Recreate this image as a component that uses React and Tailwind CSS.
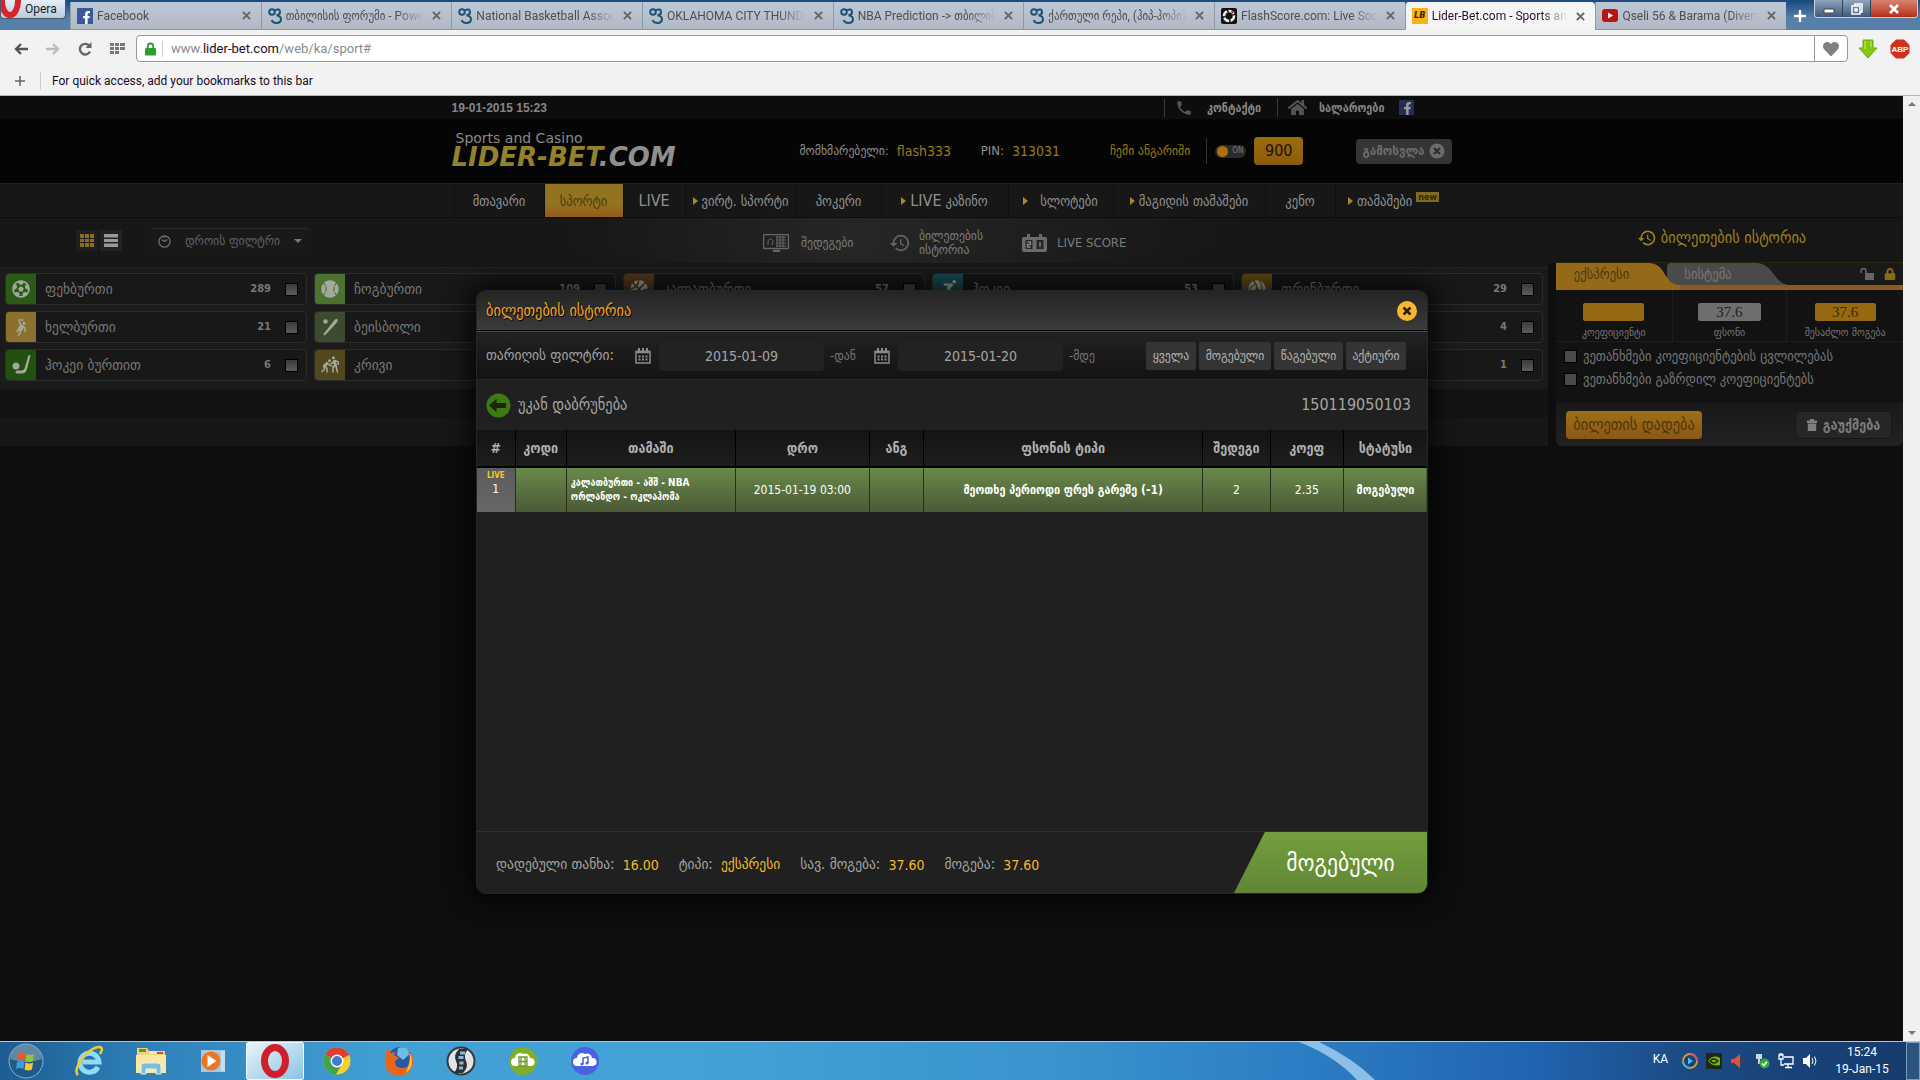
import { FaFutbol, FaBaseballBall, FaBasketballBall, FaVolleyballBall, FaHockeyPuck, FaHeart, FaHome, FaLock, FaFacebookF, FaSkating } from "react-icons/fa";
import { MdPhone, MdHistory, MdSportsHandball, MdSportsHockey, MdSportsKabaddi } from "react-icons/md";

const caps = "font-['DejaVu_Sans_Condensed','DejaVu_Sans',sans-serif]";
const system = "font-['Roboto','DejaVu_Sans_Condensed',sans-serif]";

const tabs = [
    { title: "Facebook", icon: "facebook" },
    { title: "თბილისის ფორუმი - Powered", icon: "forum" },
    { title: "National Basketball Association", icon: "forum" },
    { title: "OKLAHOMA CITY THUNDER", icon: "forum" },
    { title: "NBA Prediction -> თბილისის", icon: "forum" },
    { title: "ქართული რეპი, (ჰიპ-ჰოპი)", icon: "forum" },
    { title: "FlashScore.com: Live Soccer", icon: "flash" },
    { title: "Lider-Bet.com - Sports and", icon: "lider", active: true },
    { title: "Qseli 56 & Barama (Diversia)", icon: "youtube" },
];

const navItems = [
    { label: "მთავარი", width: "w-[90px]" },
    { label: "სპორტი", width: "w-[79px]", active: true },
    { label: "LIVE", width: "w-[62px]", big: true },
    { label: "ვირტ. სპორტი", width: "w-[111px]", arrow: true },
    { label: "პოკერი", width: "w-[85px]" },
    { prefix: "LIVE", label: "კაზინო", width: "w-[127px]", arrow: true },
    { label: "სლოტები", width: "w-[105px]", arrow: true, wide: true },
    { label: "მაგიდის თამაშები", width: "w-[152px]", arrow: true },
    { label: "კენო", width: "w-[70px]" },
    { label: "თამაშები", width: "w-[117px]", arrow: true, isNew: true },
];

const sports = [
    { name: "ფეხბურთი", count: "289", color: "bg-[#2a5a16]", Icon: FaFutbol },
    { name: "ჩოგბურთი", count: "109", color: "bg-[#4c7232]", Icon: FaBaseballBall },
    { name: "კალათბურთი", count: "57", color: "bg-[#543a1f]", Icon: FaBasketballBall },
    { name: "ჰოკეი", count: "53", color: "bg-[#1a4d57]", Icon: FaSkating },
    { name: "ფრენბურთი", count: "29", color: "bg-[#5f4b14]", Icon: FaVolleyballBall },
    { name: "ხელბურთი", count: "21", color: "bg-[#8c7030]", Icon: MdSportsHandball },
    { name: "ბეისბოლი", count: "8", color: "bg-[#3c4a30]", Icon: BatIcon },
    { name: "რაგბი", count: "7", color: "bg-[#3c4a30]", Icon: FaFutbol },
    { name: "ფუტსალი", count: "6", color: "bg-[#2a5a16]", Icon: FaFutbol },
    { name: "სნუკერი", count: "4", color: "bg-[#2a5a16]", Icon: FaHockeyPuck },
    { name: "ჰოკეი ბურთით", count: "6", color: "bg-[#22500f]", Icon: StickIcon },
    { name: "კრივი", count: "3", color: "bg-[#51481f]", Icon: MdSportsKabaddi },
    { name: "დარტსი", count: "2", color: "bg-[#3c4a30]", Icon: FaFutbol },
    { name: "ბენდი", count: "2", color: "bg-[#2a5a16]", Icon: MdSportsHockey },
    { name: "ფორმულა 1", count: "1", color: "bg-[#2a5a16]", Icon: FaHockeyPuck },
];

const columns = [
    { title: "#", width: "w-[4%]" },
    { title: "კოდი", width: "w-[5.4%]" },
    { title: "თამაში", width: "w-[17.8%]" },
    { title: "დრო", width: "w-[14.1%]" },
    { title: "ანგ", width: "w-[5.7%]" },
    { title: "ფსონის ტიპი", width: "w-[29.4%]" },
    { title: "შედეგი", width: "w-[7.1%]" },
    { title: "კოეფ", width: "w-[7.7%]" },
    { title: "სტატუსი", width: "w-[8.8%]" },
];

const totals = [
    { label: "დადებული თანხა:", value: "16.00" },
    { label: "ტიპი:", value: "ექსპრესი", word: true },
    { label: "სავ. მოგება:", value: "37.60" },
    { label: "მოგება:", value: "37.60" },
];

function BatIcon(props) {
    return (
        <svg viewBox="0 0 20 20" fill="currentColor" width="18" height="18" {...props}>
            <path d="M18 1.5c1 1 .6 2.2-.4 3.4L9 14.5 4 19.5 2.5 18 7 12.5 15 2.2c1-1.2 2-1.5 3-.7z" />
            <circle cx="5" cy="4" r="2.5" />
        </svg>
    );
}

function StickIcon(props) {
    return (
        <svg viewBox="0 0 20 20" fill="currentColor" width="20" height="20" {...props}>
            <path d="M17.5 0l2 .6L16 14c-.8 3-2.600 4.600-5.5 4.600H7c-1.5 0-2.4-.6-2.4-1.6S5.5 15.5 7 15.5h3.5c1.6 0 2.7-.8 3.2-2.5z" />
            <circle cx="5" cy="11" r="3.5" />
        </svg>
    );
}

function CalendarIcon() {
    return (
        <svg viewBox="0 0 16 16" width="16" height="16" className="shrink-0 text-[#8b8b8b]" fill="none" stroke="currentColor">
            <path d="M1 3.5h14V15H1z" strokeWidth="1.5" />
            <path d="M1.500 4h13" strokeWidth="2.5" />
            <path d="M4 0v3M8 0v3M12 0v3" strokeWidth="2" />
            <path d="M3.5 8.500h9M3.5 11.500h9" strokeWidth="1.800" strokeDasharray="2 1.5" />
        </svg>
    );
}

function TabIcon({ type }) {
    if (type === "facebook") {
        return (
            <span className="flex size-4 shrink-0 items-end justify-end bg-[#3b5998] text-white">
                <FaFacebookF size={13} />
            </span>
        );
    }
    if (type === "forum") {
        return (
            <svg viewBox="0 0 14 16" className="h-4 w-[14px] shrink-0" fill="none" stroke="#1d5273" strokeWidth="2">
                <circle cx="4" cy="4" r="2.8" />
                <path d="M7 2.200Q12 0 12 4 12 7 8.500 7.300 13 8 13 11.500 12.500 15 8.500 15 4.500 15 3.800 12" />
            </svg>
        );
    }
    if (type === "flash") {
        return (
            <svg viewBox="0 0 16 16" className="size-4 shrink-0">
                <rect width="16" height="16" rx="2" fill="#111" />
                <circle cx="8" cy="8" r="5" fill="none" stroke="#eee" strokeWidth="2.5" strokeDasharray="6 1.5" />
                <path d="M10 3h4l-3 3z" fill="#d22" />
            </svg>
        );
    }
    if (type === "lider") {
        return <span className={`${caps} flex size-4 shrink-0 items-center justify-center bg-[#fbb117] text-[9px] font-bold text-[#3a2200] italic`}>LB</span>;
    }
    return (
        <svg viewBox="0 0 16 16" className="size-4 shrink-0">
            <rect y="1" width="16" height="13" rx="3" fill="#b81414" />
            <path d="M6 4.5l5 3-5 3z" fill="#fff" />
        </svg>
    );
}

function BrowserTabs() {
    return (
        <div className="flex h-[30px] items-end bg-linear-to-b from-[#1d4d80] from-5% to-[#5680a8] to-60% pr-0.5">
            <button className={`${system} flex h-[19px] w-[66px] shrink-0 items-center gap-1 self-start overflow-hidden rounded-b border border-t-0 border-[#4a5b70] bg-linear-to-b from-[#e6edf6] to-[#b9cbe0] text-xs text-[#222]`}>
                <svg viewBox="0 0 20 18" className="h-[18px] w-5 shrink-0">
                    <ellipse cx="9" cy="1" rx="8" ry="14" fill="none" stroke="#d8232c" strokeWidth="6" />
                </svg>
                Opera
            </button>
            <div className="ml-1 flex h-7 min-w-0 flex-1">
                {tabs.map((tab) => (
                    <div
                        key={tab.title}
                        className={`flex min-w-0 max-w-[191px] flex-1 items-center gap-1 border-l border-[#8e9aa8] pl-1.5 pr-2.5 ${tab.active ? "rounded-t bg-[#f5f5f5]" : "border-b border-b-[#8996a5] bg-linear-to-b from-[#bdc9d7] to-[#b0bac5]"}`}
                    >
                        <TabIcon type={tab.icon} />
                        <span className={`${system} min-w-0 flex-1 overflow-hidden text-xs whitespace-nowrap [mask-image:linear-gradient(to_right,black_80%,transparent)] ${tab.active ? "text-[#2a1030]" : "text-[#4c4f55]"}`}>
                            {tab.title}
                        </span>
                        <button aria-label="Close tab" className="ml-1">
                            <svg viewBox="0 0 10 10" className="size-[9px]" stroke="#666" strokeWidth="2.2">
                                <path d="M1 1l8 8M9 1l-8 8" />
                            </svg>
                        </button>
                    </div>
                ))}
                <button aria-label="New tab" className="mx-2 self-center">
                    <svg viewBox="0 0 12 12" className="size-3" stroke="#fff" strokeWidth="2.5">
                        <path d="M6 0v12M0 6h12" />
                    </svg>
                </button>
            </div>
            <div className="flex h-[18px] w-[104px] shrink-0 self-start overflow-hidden rounded-b border border-t-0 border-[#c3d2e2] text-white">
                <button aria-label="Minimize" className="flex w-7 items-center justify-center border-r border-[#32455c] bg-linear-to-b from-[#8fa5be] to-[#41597a]">
                    <svg viewBox="0 0 12 10" className="h-2.5 w-3"><path d="M1 5h10v4H1z" fill="#fff" stroke="#444" /></svg>
                </button>
                <button aria-label="Restore" className="flex w-7 items-center justify-center border-r border-[#32455c] bg-linear-to-b from-[#8fa5be] to-[#41597a]">
                    <svg viewBox="0 0 12 12" className="size-3" fill="none" stroke="#fff" strokeWidth="1.5">
                        <path d="M4 3V1h7v8H9M1 3h8v8H1zM4 6h2v2H4z" />
                    </svg>
                </button>
                <button aria-label="Close" className="flex flex-1 items-center justify-center bg-linear-to-b from-[#d6836f] to-[#b52b15]">
                    <svg viewBox="0 0 12 10" className="h-2.5 w-3" stroke="#fff" strokeWidth="2.5"><path d="M2 1l8 8M10 1L2 9" /></svg>
                </button>
            </div>
        </div>
    );
}

function AddressBar() {
    return (
        <div className={`${system} h-[66px] border-b border-[#b5b5b5] bg-[#f2f2f2] pt-[5px]`}>
            <div className="flex h-[27px] items-center">
                <div className="flex w-[136px] shrink-0 items-center gap-[18px] pl-3.5">
                    <button aria-label="Back">
                        <svg viewBox="0 0 14 12" className="h-3 w-3.5" fill="none" stroke="#555" strokeWidth="2.4"><path d="M7 1L2 6l5 5M2 6h12" /></svg>
                    </button>
                    <button aria-label="Forward">
                        <svg viewBox="0 0 14 12" className="h-3 w-3.5" fill="none" stroke="#bbb" strokeWidth="2.4"><path d="M7 1l5 5-5 5M12 6H0" /></svg>
                    </button>
                    <button aria-label="Reload">
                        <svg viewBox="0 0 14 14" className="size-3.5" fill="none" stroke="#666" strokeWidth="2.4">
                            <path d="M12 9.5A5.3 5.3 0 1 1 11.5 4" />
                            <path d="M13.5 0v6h-6z" fill="#666" stroke="none" />
                        </svg>
                    </button>
                    <button aria-label="Speed dial">
                        <svg viewBox="0 0 16 12" className="h-3 w-4" fill="#777">
                            <path d="M0 0h4v3H0zM5 0h4v3H5zM10 0h5v3h-5zM0 4h4v3H0zM5 4h4v3H5zM10 4h5v3h-5zM0 8h4v3H0zM5 8h4v3H5z" />
                        </svg>
                    </button>
                </div>
                <div className="flex h-[27px] flex-1 items-center rounded border border-[#999] bg-white">
                    <svg viewBox="0 0 12 14" className="ml-2 h-3.5 w-[11px] shrink-0">
                        <path d="M3 7V4a3 3 0 0 1 6 0v3" fill="none" stroke="#2f9e31" strokeWidth="2" />
                        <rect y="6" width="12" height="8" rx="1" fill="#2f9e31" />
                    </svg>
                    <span className="ml-1.5 h-4 w-px bg-[#ccc]" />
                    <a href="#" className="ml-2 flex-1 text-[13px] text-[#8a8a8a]">
                        www.<span className="text-[#1c0a1e]">lider-bet.com</span>/web/ka/sport#
                    </a>
                    <button aria-label="Bookmark" className="flex h-full w-[33px] items-center justify-center border-l border-[#999]">
                        <FaHeart size={16} color="#808080" />
                    </button>
                </div>
                <div className="flex w-[72px] shrink-0 items-center justify-between pr-2.5 pl-2.5">
                    <button aria-label="Download">
                        <svg viewBox="0 0 20 20" className="size-5"><path d="M5 1h10v8h4l-9 10L1 9h4z" fill="#86c914" stroke="#6aa80f" /><path d="M7 2v8M13 2v6" stroke="#c8ee6c" /></svg>
                    </button>
                    <button aria-label="Adblock">
                        <svg viewBox="0 0 20 20" className="size-5">
                            <path d="M6 .5h8L19.5 6v8L14 19.5H6L.5 14V6z" fill="#d1301c" />
                            <text x="10" y="13" textAnchor="middle" fontSize="8" fontWeight="bold" fill="#fff" fontFamily="Liberation Sans, sans-serif">ABP</text>
                        </svg>
                    </button>
                </div>
            </div>
            <div className="flex h-[38px] items-center">
                <button aria-label="Add bookmark" className="ml-[15px]">
                    <svg viewBox="0 0 10 10" className="size-2.5" stroke="#666" strokeWidth="1.6"><path d="M5 0v10M0 5h10" /></svg>
                </button>
                <span className="ml-[15px] h-[18px] w-px bg-[#ccc]" />
                <span className="ml-[11px] text-xs text-[#1c0a1e]">For quick access, add your bookmarks to this bar</span>
            </div>
        </div>
    );
}

function SiteHeader() {
    return (
        <header>
            <div className="h-[23px] bg-[#0d0d0d]">
                <div className="mx-auto flex h-full max-w-[1000px] items-center text-xs font-bold text-[#868686]">
                    <span className="flex-1 font-['Liberation_Sans',sans-serif]">19-01-2015 15:23</span>
                    <a href="#" className="flex w-[113px] items-center border-l border-[#3a3a3a] pl-2.5">
                        <MdPhone size={18} color="#555" className="mr-3.5" />
                        კონტაქტი
                    </a>
                    <a href="#" className="flex items-center border-l border-[#3a3a3a] pl-2.5">
                        <FaHome size={19} color="#555" className="mr-3" />
                        სალაროები
                    </a>
                    <a href="#" aria-label="Facebook" className="mr-[38px] ml-3.5 flex size-[15px] items-end justify-end bg-[#232f57] text-[#9a9a9a]">
                        <FaFacebookF size={13} />
                    </a>
                </div>
            </div>
            <div className="h-16 bg-[#050505]">
                <div className="mx-auto flex h-full max-w-[1000px] items-center text-[#909090]">
                    <a href="#" className="w-[348px] pb-0.5">
                        <span className="block pl-1 font-['DejaVu_Sans',sans-serif] text-sm leading-[14px] text-[#8a8a8a]">Sports and Casino</span>
                        <span className="block font-['DejaVu_Sans',sans-serif] text-[26px] leading-6 font-bold whitespace-nowrap text-[#8f8f8f] italic">
                            <span className="text-[#94812b]">LIDER-BET</span>.COM
                        </span>
                    </a>
                    <span className="text-[13px]">მომხმარებელი:</span>
                    <span className="ml-2 w-[84px] text-sm text-[#9b7a1d]">flash333</span>
                    <span className="text-[13px]">PIN:</span>
                    <span className="ml-2 w-[98px] text-sm text-[#9b7a1d]">313031</span>
                    <a href="#" className="text-[13px] text-[#a07a14]">ჩემი ანგარიში</a>
                    <span className="ml-4 h-[26px] w-px bg-[#333]" />
                    <button role="switch" aria-checked="true" aria-label="ON" className="ml-2 flex h-[13px] w-[31px] items-center gap-1 rounded-full bg-[#2b2b2b] pl-0.5 text-[8px] text-[#777]">
                        <span className="size-[11px] rounded-full bg-[#b06f0a]" />
                        ON
                    </button>
                    <button className="ml-2 h-7 w-[49px] rounded bg-linear-to-b from-[#9a6d0c] to-[#8c5a0e] text-base text-[#1c1200]">900</button>
                    <button className="ml-auto flex h-[25px] w-24 items-center justify-center gap-1 rounded bg-[#353535] text-[13px] font-bold text-[#6c6c6c]">
                        გამოსვლა
                        <svg viewBox="0 0 16 16" className="size-4">
                            <circle cx="8" cy="8" r="7.5" fill="#6c6c6c" />
                            <path d="M5 5l6 6M11 5l-6 6" stroke="#2a2a2a" strokeWidth="2" />
                        </svg>
                    </button>
                </div>
            </div>
            <nav className="h-[35px] border-y border-[#202020] border-b-[#0d0d0d] bg-[#171717]">
                <div className="mx-auto flex h-full max-w-[1000px] pl-0.5">
                    {navItems.map((item) => (
                        <a
                            key={item.label}
                            href="#"
                            className={`${item.width} flex items-center justify-center border-l border-[#0e0e0e] text-sm whitespace-nowrap ${item.active ? "bg-linear-to-b from-[#927320] from-60% to-[#96591a] text-[#4f3a0c]" : "text-[#919191]"}`}
                        >
                            {item.arrow && <span className={`${item.wide ? "mr-3" : "mr-1"} border-y-4 border-l-[5px] border-y-transparent border-l-[#a78a2a]`} />}
                            {item.prefix && <span className="mr-1 text-base">{item.prefix}</span>}
                            <span className={item.big ? "text-base" : ""}>{item.label}</span>
                            {item.isNew && <span className="mb-2 ml-1 bg-[#806a20] px-0.5 text-[9px] leading-[10px] font-bold text-[#332a08]">new</span>}
                        </a>
                    ))}
                </div>
            </nav>
        </header>
    );
}

function SubNav() {
    return (
        <div className="grid h-[45px] grid-cols-[1fr_auto_1fr] items-center bg-linear-to-r from-[#171717] from-30% via-[#262626] via-45% to-[#161616] to-65% text-[#7c7c7c]">
            <div className="flex items-center pl-[76px]">
                <button aria-label="Grid view" className="flex h-[21px] w-[22px] items-center justify-center bg-[#1f1f1f]">
                    <svg viewBox="0 0 14 13" className="h-[13px] w-3.5" fill="#8f6b1b"><path d="M0 0h4v4H0zM5 0h4v4H5zM10 0h4v4h-4zM0 5h4v3H0zM5 5h4v3H5zM10 5h4v3h-4zM0 9h4v4H0zM5 9h4v4H5zM10 9h4v4h-4z" /></svg>
                </button>
                <button aria-label="List view" className="ml-0.5 flex h-[21px] w-[22px] items-center justify-center bg-[#222]">
                    <svg viewBox="0 0 14 13" className="h-[13px] w-3.5" fill="#999"><path d="M0 0h14v3.5H0zM0 5h14v3H0zM0 9.5h14V13H0z" /></svg>
                </button>
                <div className="relative ml-[28px] flex h-[26px] w-40 items-center rounded border-t border-[#2c2c2c] bg-[#191919]">
                    <svg viewBox="0 0 14 14" className="absolute left-2 size-[13px]" fill="none" stroke="#6b6b6b" strokeWidth="1.5"><circle cx="7" cy="7" r="6" /><path d="M4 5l3 2 3-2M5 2h4" /></svg>
                    <select aria-label="დროის ფილტრი" className="h-full w-full appearance-none bg-transparent pl-[35px] text-[13px] text-[#616161]">
                        <option>დროის ფილტრი</option>
                    </select>
                    <span className="pointer-events-none absolute right-2 border-x-4 border-t-4 border-x-transparent border-t-[#777]" />
                </div>
            </div>
            <div className="flex items-center pt-1 text-[13px]">
                <a href="#" className="flex w-[126px] items-center gap-3">
                    <svg viewBox="0 0 26 18" className="h-[18px] w-[26px]" fill="none" stroke="#666">
                        <rect x=".5" y=".5" width="25" height="14" rx="1" strokeWidth="1.5" />
                        <path d="M5 11V8c0-4 5-4 5 0l-1 3M13 3h10M13 6h10M13 9h10M13 12h10M14 2v11M17 2v11M20 2v11" />
                        <path d="M10 17h7" strokeWidth="2.5" />
                    </svg>
                    შედეგები
                </a>
                <a href="#" className="flex w-[133px] items-center gap-2 leading-[14px]">
                    <MdHistory size={22} color="#666" />
                    <span className="w-20">ბილეთების ისტორია</span>
                </a>
                <a href="#" className="flex w-[118px] items-center gap-2.5 whitespace-nowrap">
                    <svg viewBox="0 0 25 18" className="h-[18px] w-[25px]">
                        <path d="M2 3h3V0h3v3h9V0h3v3h3a2 2 0 0 1 2 2v11a2 2 0 0 1-2 2H2a2 2 0 0 1-2-2V5a2 2 0 0 1 2-2z" fill="#6b6b6b" />
                        <rect x="3.5" y="6" width="7" height="9" fill="#262626" />
                        <rect x="14.5" y="6" width="7" height="9" fill="#262626" />
                        <path d="M5.500 8h3v2.500h-3V13h3M18 8v5" fill="none" stroke="#888" strokeWidth="1.3" />
                    </svg>
                    LIVE SCORE
                </a>
            </div>
            <a href="#" className="ml-auto flex h-full w-[347px] items-center justify-center gap-1 border-b border-[#2a2310] pr-4 pb-1 text-base text-[#9d8121]">
                <MdHistory size={20} />
                ბილეთების ისტორია
            </a>
        </div>
    );
}

function SportRow({ sport, index }) {
    const { Icon } = sport;
    return (
        <label htmlFor={`sport-${index}`} className="flex h-8 items-center overflow-hidden rounded border border-[#2c2c2c] bg-[#181818] text-[#777]">
            <span className={`${sport.color} flex h-full w-[30px] items-center justify-center text-[#a3aa9b]`}>
                <Icon size={18} />
            </span>
            <span className="ml-[9px] flex-1 text-[15px]">{sport.name}</span>
            <span className="text-[11px] font-bold">{sport.count}</span>
            <input id={`sport-${index}`} type="checkbox" className="mr-2 ml-3.5 size-[13px] appearance-none border border-black bg-linear-to-b from-[#3b3b3b] to-[#5c5c5c]" />
        </label>
    );
}

function BetSlip() {
    return (
        <aside className="w-[347px] shrink-0 overflow-hidden rounded-b-md bg-[#121212] text-[#777]">
            <div className="relative flex h-[27px] border-b-[5px] border-[#8a5b1b] bg-[#1a1a1a]">
                <svg viewBox="0 0 240 27" className="absolute top-0 left-0 h-[27px] w-60">
                    <path d="M111 22V4q0-4 4-4h85c18 0 18 22 34 22z" fill="#4a4a4a" />
                    <path d="M0 0h92c20 0 14 22 32 22v5H0z" fill="#94691a" />
                </svg>
                <button className="relative h-[22px] w-[111px] pr-5 text-sm text-[#4d370c]">ექსპრესი</button>
                <button className="relative h-[22px] w-[82px] text-sm text-[#787878]">სისტემა</button>
                <div className="ml-auto flex items-center gap-2.5 pr-[7px]">
                    <svg viewBox="0 0 14 12" className="h-3 w-3.5"><path d="M1 5V3a2 2 0 0 1 5 0v3" fill="none" stroke="#666" strokeWidth="1.5" /><rect x="5" y="5" width="9" height="7" fill="#666" /></svg>
                    <FaLock size={12} color="#8a6a16" />
                </div>
            </div>
            <div className="grid h-[52px] grid-cols-3 border-b border-[#1d1d1d] text-[11px] leading-[15px]">
                <div className="flex flex-col items-center gap-1 pt-[13px]">
                    <input id="coef" className="h-[18px] w-[61px] rounded-xs bg-[#94690f]" />
                    <label htmlFor="coef">კოეფიციენტი</label>
                </div>
                <div className="flex flex-col items-center gap-1 border-x border-[#1d1d1d] pt-[13px]">
                    <input id="stake" defaultValue="37.6" className="h-[18px] w-[63px] rounded-xs bg-[#6e6e6e] text-center font-['Liberation_Serif',serif] text-[15px] text-[#222]" />
                    <label htmlFor="stake">ფსონი</label>
                </div>
                <div className="flex flex-col items-center gap-1 pt-[13px]">
                    <input id="win" defaultValue="37.6" className="h-[18px] w-[61px] rounded-xs bg-[#94690f] text-center font-['Liberation_Serif',serif] text-[15px] text-[#3d2a05]" />
                    <label htmlFor="win">შესაძლო მოგება</label>
                </div>
            </div>
            <div className="flex h-[61px] flex-col gap-[3px] pt-1 pl-2 text-sm whitespace-nowrap">
                <label className="flex items-center gap-1.5">
                    <input type="checkbox" className="size-[13px] appearance-none border border-black bg-[#4a4a4a]" />
                    ვეთანხმები კოეფიციენტების ცვლილებას
                </label>
                <label className="flex items-center gap-1.5">
                    <input type="checkbox" className="size-[13px] appearance-none border border-black bg-[#4a4a4a]" />
                    ვეთანხმები გაზრდილ კოეფიციენტებს
                </label>
            </div>
            <div className="flex h-[43px] items-center justify-between bg-linear-to-b from-[#191919] to-[#222] pr-[11px] pl-2.5">
                <button className="h-7 w-[136px] rounded bg-linear-to-b from-[#9d7017] to-[#8a5718] text-base text-[#4e3709]">ბილეთის დადება</button>
                <button className="flex h-7 w-[97px] items-center justify-center gap-1.5 rounded border border-[#161616] bg-[#262626] text-sm font-bold text-[#7d7d7d]">
                    <svg viewBox="0 0 10 12" className="h-3 w-2.5" fill="#808080"><path d="M3 0h4v1.5h3V4H0V1.5h3zM.8 4.5h8.4V12H.8z" /></svg>
                    გაუქმება
                </button>
            </div>
        </aside>
    );
}

function HistoryModal() {
    return (
        <div role="dialog" aria-label="ბილეთების ისტორია" className="mt-[194px] ml-px flex h-fit w-[952px] max-w-full flex-col overflow-hidden rounded-[10px] border border-[#262626] bg-[#202020] text-[#a5a5a5] shadow-[0_0_24px_8px_rgba(0,0,0,0.7)]">
            <div className="flex h-10 items-center justify-between border-b border-black bg-linear-to-b from-[#242424] to-[#3b3b3b] pr-2.5 pl-[9px]">
                <h2 className="text-base text-[#f5a31d] [text-shadow:1px_1px_1px_#000]">ბილეთების ისტორია</h2>
                <button aria-label="Close">
                    <svg viewBox="0 0 20 20" className="size-5">
                        <circle cx="10" cy="10" r="10" fill="#f7b733" />
                        <path d="M6.5 6.5l7 7M13.5 6.5l-7 7" stroke="#2b2108" strokeWidth="2.5" />
                    </svg>
                </button>
            </div>
            <div className="flex h-12 items-center border-t border-[#4a4a4a] bg-linear-to-b from-[#222] to-[#131313] pl-[9px] pr-[21px]">
                <span className="w-[149px] text-[15px] whitespace-nowrap">თარიღის ფილტრი:</span>
                <CalendarIcon />
                <input id="from" defaultValue="2015-01-09" className="ml-2 h-[30px] w-[165px] rounded bg-[#222] text-center text-sm" />
                <label htmlFor="from" className="ml-1.5 w-11 text-[13px] text-[#777]">-დან</label>
                <CalendarIcon />
                <input id="to" defaultValue="2015-01-20" className="ml-2 h-[30px] w-[165px] rounded bg-[#222] text-center text-sm" />
                <label htmlFor="to" className="ml-1.5 text-[13px] text-[#777]">-მდე</label>
                <div className="ml-auto flex gap-[3px] text-[13px] whitespace-nowrap text-[#b5b5b5]">
                    <button className="h-7 w-[50px] rounded-xs bg-[#343434]">ყველა</button>
                    <button className="h-7 w-[72px] rounded-xs bg-[#343434]">მოგებული</button>
                    <button className="h-7 w-[69px] rounded-xs bg-[#343434]">წაგებული</button>
                    <button className="h-7 w-[60px] rounded-xs bg-[#343434]">აქტიური</button>
                </div>
            </div>
            <div className="flex h-[51px] items-center justify-between border-t border-[#282828] pr-4 pl-[9px]">
                <button className="flex items-center gap-[7px] text-base">
                    <svg viewBox="0 0 26 26" className="size-[25px]">
                        <circle cx="13" cy="13" r="12.5" fill="#3d7a0f" />
                        <path d="M3 13l8-7v4.5h10v5H11V20z" fill="#1c260f" />
                    </svg>
                    უკან დაბრუნება
                </button>
                <span className="text-base">150119050103</span>
            </div>
            <table className="w-full table-fixed border-collapse text-center">
                <thead>
                    <tr className="h-[37px] bg-linear-to-b from-[#141414] to-[#1e1e1e] text-sm text-[#b0b0b0]">
                        {columns.map((col) => (
                            <th key={col.title} className={`${col.width} border-r border-b-2 border-black whitespace-nowrap last:border-r-0`}>{col.title}</th>
                        ))}
                    </tr>
                </thead>
                <tbody>
                    <tr className="h-[45px] bg-linear-to-b from-[#6a8b4a] to-[#4a5a37] text-xs text-white [&>td]:border-r [&>td]:border-[#263019] [&>td]:p-0 [&>td:last-child]:border-r-0">
                        <td className="bg-linear-to-b from-[#5c5c5c] to-[#676767] align-top">
                            <span className="block pt-0.5 text-[8px] leading-[11px] font-bold text-[#f2c82c]">LIVE</span>
                            1
                        </td>
                        <td></td>
                        <td className="text-left text-[10px] leading-[14px] font-bold whitespace-nowrap">
                            <div className="pl-1">
                                კალათბურთი - აშშ - NBA
                                <br />
                                ორლანდო - ოკლაჰომა
                            </div>
                        </td>
                        <td>2015-01-19 03:00</td>
                        <td></td>
                        <td className="font-bold">მეოთხე პერიოდი ფრეს გარეშე (-1)</td>
                        <td>2</td>
                        <td>2.35</td>
                        <td className="font-bold">მოგებული</td>
                    </tr>
                </tbody>
            </table>
            <div className="min-h-[319px]" />
            <div className="flex h-[62px] items-center border-t border-[#303030] pl-[19px]">
                <div className="flex flex-1 gap-5 pt-1 text-[15px] whitespace-nowrap">
                    {totals.map((item) => (
                        <span key={item.label} className="flex items-center gap-2">
                            {item.label}
                            <span className={`text-[#f4b928] ${item.word ? "text-[15px]" : "text-sm"}`}>{item.value}</span>
                        </span>
                    ))}
                </div>
                <div className="flex h-full w-[193px] items-center justify-center bg-linear-to-b from-[#739f3b] to-[#618636] pl-5 text-2xl text-white [clip-path:polygon(16%_0,100%_0,100%_100%,0_100%)]">მოგებული</div>
            </div>
        </div>
    );
}

function ScrollBar() {
    return (
        <div className="flex w-[17px] shrink-0 flex-col items-center justify-between bg-[#f0f0f0] py-1.5">
            <span className="border-x-4 border-b-4 border-x-transparent border-b-[#777]" />
            <span className="border-x-4 border-t-4 border-x-transparent border-t-[#777]" />
        </div>
    );
}

function Taskbar() {
    return (
        <footer className={`${system} flex h-[39px] shrink-0 items-center border-t border-[#a9c9e2] bg-[linear-gradient(to_right,#1c5c92,#2f82ba_8%,#419fd3_20%,#45a2d6_35%,#3a93cd_55%,#2d7fc3_67%,#2064ae_80%,#1b4a83_88%,#163a6c)] text-xs text-white`}>
            <button aria-label="Start" className="ml-2 shrink-0">
                <svg viewBox="0 0 36 36" className="size-9">
                    <circle cx="18" cy="18" r="17" fill="#215a86" stroke="#7fb6da" />
                    <path d="M2 16a16 15 0 0 1 32 0q-16 6-32 0z" fill="#8ba9bc" opacity=".6" />
                    <path d="M10 11q4-2.5 7.5-.5l-1 7q-4-2-7.5 0z" fill="#e8592a" />
                    <path d="M18.5 11q4 2 7.5 0l-1 7q-4 2-7.5 0z" fill="#8cc63e" />
                    <path d="M9 19q4-2 7.5 0l-1 7q-4-2-7.5 0z" fill="#3d9be0" />
                    <path d="M17.5 19.5q4 2 7.5 0l-1 7q-4 2-7.5 0z" fill="#fbc52d" />
                </svg>
            </button>
            <div className="ml-3.5 flex h-full items-center">
                <button aria-label="Internet Explorer" className="flex w-[62px] justify-center">
                    <svg viewBox="0 0 32 32" className="size-8" fill="none">
                        <path d="M25 22a9.5 9.5 0 1 1 1-5H10" stroke="#8fdcfa" strokeWidth="5" />
                        <path d="M5 30C-2 24 17 0 27 2c3 1 2 4 0 7" stroke="#f6ca2e" strokeWidth="2.5" />
                    </svg>
                </button>
                <button aria-label="Explorer" className="flex w-[62px] justify-center">
                    <svg viewBox="0 0 32 30" className="h-[30px] w-8">
                        <path d="M2 2h10l2 3h16v20H2z" fill="#f0d37a" />
                        <path d="M4 3h7v3H4z" fill="#4c9c4a" /><path d="M14 5h7v3h-7z" fill="#e9e5d0" /><path d="M22 6h6v2h-6z" fill="#d04b3a" />
                        <path d="M1 9h30v18H1z" fill="#f9e7a4" />
                        <path d="M6 28V20q0-3 3-3h14q3 0 3 3v8h-5v-5H11v5z" fill="#7cbcdf" stroke="#dff1fa" />
                    </svg>
                </button>
                <button aria-label="Media Player" className="flex w-[62px] justify-center">
                    <svg viewBox="0 0 26 26" className="size-[26px]">
                        <path d="M1 2h24v22H1z" fill="#a5cbe4" /><path d="M22 3v20M24 3v20" stroke="#e7f2fa" />
                        <circle cx="11" cy="13" r="9.5" fill="#ee7420" /><path d="M7.5 7l9 6-9 6z" fill="#fff" />
                    </svg>
                </button>
                <button aria-label="Opera" className="mx-0.5 flex h-[38px] w-[58px] items-center justify-center rounded-xs border border-[#eef7fc] bg-linear-to-br from-[#e8f4fa] to-[#8dc3e4]">
                    <svg viewBox="0 0 30 34" className="h-[34px] w-[30px]">
                        <ellipse cx="15" cy="17" rx="10.500" ry="13.500" fill="none" stroke="#cf1f2b" strokeWidth="7" />
                    </svg>
                </button>
                <button aria-label="Chrome" className="flex w-[62px] justify-center">
                    <svg viewBox="0 0 28 28" className="size-7">
                        <circle cx="14" cy="14" r="13.5" fill="#fbce2e" />
                        <path d="M14 14L2 7.5A13.5 13.5 0 0 1 26 8z" fill="#dc3e31" /><path d="M14 14L2 7.5A13.5 13.5 0 0 0 13 27.5l5-9z" fill="#42a349" />
                        <path d="M12 8h14.2l-1-2H12z" fill="#dc3e31" />
                        <circle cx="14" cy="14" r="6.5" fill="#fff" /><circle cx="14" cy="14" r="5" fill="#3f7dd1" />
                    </svg>
                </button>
                <button aria-label="Firefox" className="flex w-[62px] justify-center">
                    <svg viewBox="0 0 30 30" className="size-[30px]">
                        <circle cx="16" cy="13" r="12" fill="#2a56a3" />
                        <path d="M14 2c6-2 11 1 12 6l-7 6-6-5z" fill="#6cbde8" />
                        <path d="M3 2l4 5 5-1c-1 1-2 2-2 3l5 3-4 3c0 5 3 7 7 7 5 0 8-3 8-8 0-4-1-7-3-9 5 3 7 7 6 13-1 7-7 12-14 12S1 25 1 17C1 13 2 8 3 2z" fill="#e8651d" />
                        <path d="M26 7c4 9 2 17-5 20 4-5 5-12 5-20z" fill="#f9c22c" />
                    </svg>
                </button>
                <button aria-label="Media Player Classic" className="flex w-[62px] justify-center">
                    <svg viewBox="0 0 30 30" className="size-[30px]">
                        <circle cx="15" cy="15" r="13.5" fill="#e0e4e6" stroke="#36383b" strokeWidth="2" />
                        <path d="M13 3h9q-5 6-2 12t-3 12H8q5-6 2-12t3-12z" fill="#2d3135" />
                        <path d="M14 7h5M12.500 11.500h5M13.500 17h4M13 22h4" stroke="#8fb9d6" strokeWidth="3" />
                    </svg>
                </button>
                <button aria-label="Video converter" className="flex w-[62px] justify-center">
                    <svg viewBox="0 0 30 30" className="size-[30px]">
                        <circle cx="15" cy="15" r="14" fill="#7fae2c" />
                        <path d="M7 20a4 4 0 0 1 0-8 5 5 0 0 1 8-4 5 5 0 0 1 7 4 4 4 0 0 1 1 8z" fill="#fff" />
                        <path d="M11 11h8v9h-8zM11 15.5h8M13 11v9M17 11v9" fill="none" stroke="#6b9a20" strokeWidth="1.3" />
                    </svg>
                </button>
                <button aria-label="Music converter" className="flex w-[62px] justify-center">
                    <svg viewBox="0 0 30 30" className="size-[30px]">
                        <circle cx="15" cy="15" r="14" fill="#4a62e0" />
                        <path d="M7 20a4 4 0 0 1 0-8 5 5 0 0 1 8-4 5 5 0 0 1 7 4 4 4 0 0 1 1 8z" fill="#fff" />
                        <path d="M13 18v-6l5-1v6" fill="none" stroke="#4a62e0" strokeWidth="1.5" /><circle cx="12" cy="18" r="1.6" fill="#4a62e0" /><circle cx="17" cy="17" r="1.6" fill="#4a62e0" />
                    </svg>
                </button>
            </div>
            <svg viewBox="0 0 90 38" preserveAspectRatio="none" className="ml-auto h-full w-[90px]">
                <path d="M0 0h20q34 16 56 38H58Q36 14 0 0z" fill="#9dcbf0" opacity=".85" />
            </svg>
            <div className="ml-[264px] flex items-center">
                <span className="mr-3.5 pb-1">KA</span>
                <div className="flex items-center gap-2">
                    <svg viewBox="0 0 16 16" className="size-4"><circle cx="8" cy="8" r="7" fill="#17456f" stroke="#e39a3a" strokeWidth="1.8" /><path d="M8 1a7 7 0 0 1 7 7" stroke="#d34a8a" strokeWidth="1.8" fill="none" /><path d="M1 8a7 7 0 0 0 7 7" stroke="#3fb4e8" strokeWidth="1.8" fill="none" /><path d="M6 4.5l5 3.5-5 3.5z" fill="#3fc0f0" /></svg>
                    <svg viewBox="0 0 16 16" className="size-4"><rect width="16" height="16" fill="#1f261c" /><path d="M2 8q5-7 12-3v7Q7 14 2 8z" fill="#76b900" /><path d="M4 8q3.5-4 8 0-4 4-8 0z" fill="none" stroke="#1f261c" strokeWidth="1.3" /></svg>
                    <svg viewBox="0 0 16 16" className="size-4"><path d="M1 6h3l6-5v14l-6-5H1z" fill="#e0513a" /><path d="M12 5q2 3 0 6" stroke="#4b3b4c" strokeWidth="1.5" fill="none" /></svg>
                    <svg viewBox="0 0 16 16" className="size-4"><path d="M2 1h6v5H2zM4 6h2v5H4z" fill="#cfd6dc" /><circle cx="10.5" cy="10.5" r="5" fill="#39a935" /><path d="M8 10.5l2 2 3-4" stroke="#fff" strokeWidth="1.5" fill="none" /></svg>
                    <svg viewBox="0 0 16 16" className="size-4" fill="none" stroke="#fff" strokeWidth="1.3"><path d="M6 4h9v7H6M10 11v3M7 14.5h7M1 2h4v4H1zM2 0v2M4 0v2M3 6v6h3" /></svg>
                    <svg viewBox="0 0 16 16" className="size-4"><path d="M1 5h3l4-4v14l-4-4H1z" fill="#fff" /><path d="M10 5q2 3 0 6M12.5 3.5q3 4.5 0 9" stroke="#fff" fill="none" /></svg>
                </div>
                <div className="w-[88px] text-center leading-[17px]">
                    15:24
                    <br />
                    19-Jan-15
                </div>
            </div>
            <button aria-label="Show desktop" className="h-full w-3.5 border border-[#7d9bbd] bg-[#2d537f]" />
        </footer>
    );
}

export default function App() {
    return (
        <div className={`${caps} flex h-screen flex-col overflow-hidden bg-[#0f0f0f]`}>
            <BrowserTabs />
            <AddressBar />
            <div className="flex min-h-0 flex-1">
                <main className="relative min-w-0 flex-1 bg-[#0e0e0e]">
                    <SiteHeader />
                    <SubNav />
                    <div className="flex">
                        <div className="mr-2 flex-1 bg-[#171717]">
                            <div className="mt-1 grid grid-cols-5 gap-x-[7px] gap-y-1.5 border-t border-[#242424] bg-[#1b1b1b] px-[5px] pt-[5px] pb-2">
                                {sports.map((sport, i) => (
                                    <SportRow key={i} sport={sport} index={i} />
                                ))}
                            </div>
                            <div className="h-[29px] bg-[#131313]" />
                        </div>
                        <BetSlip />
                    </div>
                    <div className="absolute inset-0 flex justify-center">
                        <HistoryModal />
                    </div>
                </main>
                <ScrollBar />
            </div>
            <Taskbar />
        </div>
    );
}
